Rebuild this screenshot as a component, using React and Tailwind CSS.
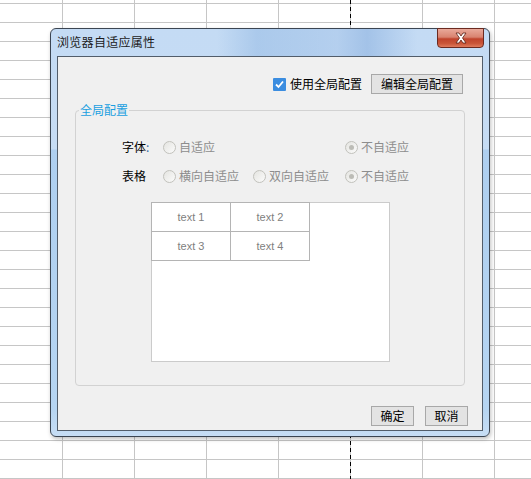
import React from "react";

const cjk = "font-['Microsoft_YaHei','Noto_Sans_CJK_SC',sans-serif]";

const Radio = ({ checked }) => (
  <span className="relative flex h-[13px] w-[13px] shrink-0 items-center justify-center rounded-full border border-[#c2c2bc] bg-[linear-gradient(135deg,#e4e4e0,#fbfbfb)]">
    {checked && <span className="h-[5px] w-[5px] rounded-full bg-[#bcbcb6]" />}
  </span>
);

const Option = ({ label, checked }) => (
  <div className="flex items-center gap-[3px] text-[#8d8d8d]">
    <Radio checked={checked} />
    <span>{label}</span>
  </div>
);

const CloseIcon = () => (
  <svg width="14" height="12" viewBox="0 0 14 12">
    <path
      d="M2 1 L5 1 L7 4 L9 1 L12 1 L8.5 6 L12 11 L9 11 L7 8 L5 11 L2 11 L5.5 6 Z"
      fill="#ffffff"
      stroke="#5a1f14"
      strokeWidth="0.8"
      strokeLinejoin="round"
    />
  </svg>
);

export default function App() {
  return (
    <div
      className={`relative h-[479px] w-[531px] overflow-hidden bg-white bg-[linear-gradient(to_right,#c6c6c6_1px,transparent_1px),linear-gradient(to_bottom,#c6c6c6_1px,transparent_1px)] bg-[length:72px_19px] bg-[position:62px_3px] ${cjk}`}
    >
      {/* page break line */}
      <div className="absolute left-[350px] top-0 h-full w-px bg-[repeating-linear-gradient(to_bottom,#000_0_4px,transparent_4px_7px)]" />

      {/* dialog */}
      <div className="absolute left-[50px] top-[28px] flex h-[409px] w-[440px] flex-col rounded-[6px] border border-[#3b4552] bg-[linear-gradient(to_bottom,#c4dbf4_0px,#c6dcf4_120px,#aecff0_121px,#b6d5f2_380px,#c8def5_409px)] px-[6px] pb-[5px] shadow-[1px_2px_4px_rgba(0,0,0,0.25)]">
        {/* title bar */}
        <div className="relative flex h-[27px] shrink-0 items-start justify-between">
          <div className="pointer-events-none absolute inset-y-0 left-[160px] w-[200px] bg-[linear-gradient(to_right,transparent,rgba(140,180,225,0.45)_20%,rgba(150,185,228,0.35)_60%,rgba(130,170,220,0.5)_75%,transparent)]" />
          <span className="relative mt-[5px] text-[12px] leading-[16px] tracking-[0.3px] text-[#1c1c1c]">
            浏览器自适应属性
          </span>
          <div className="relative -mr-px -mt-px flex h-[20px] w-[47px] items-center justify-center rounded-b-[4px] border border-[#6b2a20] bg-[linear-gradient(to_bottom,#e9a99a_0%,#d98370_45%,#c0432c_55%,#c95538_80%,#e07a5c_100%)]">
            <CloseIcon />
          </div>
        </div>

        {/* client area */}
        <div className="flex flex-1 flex-col border border-[#525d6a] bg-[#f0f0f0] text-[12px] leading-[16px] text-black">
          <div className="mr-[19px] mt-[17px] flex h-[20px] items-center justify-end">
            <span className="flex h-[13px] w-[13px] items-center justify-center rounded-[1px] bg-[#3b8de0]">
              <svg width="11" height="11" viewBox="0 0 11 11">
                <path d="M2 5.5 L4.5 8 L9 2.5" fill="none" stroke="#fff" strokeWidth="1.8" />
              </svg>
            </span>
            <span className="ml-[4px]">使用全局配置</span>
            <button className="ml-[9px] h-[20px] w-[92px] border border-[#a8a8a8] bg-[#e3e3e3] text-[12px] leading-[16px] text-black">
              编辑全局配置
            </button>
          </div>

          <fieldset className="mx-[17px] mt-[8px] h-[284px] rounded-[4px] border border-[#d2d2d2] pt-[19px]">
            <legend className="ml-[3px] px-[1px] leading-[16px] text-[#1a9fe0]">全局配置</legend>
            <div className="ml-[46px] grid grid-cols-[41px_90px_92px_auto] items-center">
              <div className="flex h-[20px] items-center">字体<span className="text-[#3a6ea5]">:</span></div>
              <Option label="自适应" />
              <div />
              <Option label="不自适应" checked />
            </div>
            <div className="ml-[46px] mt-[9px] grid grid-cols-[41px_90px_92px_auto] items-center">
              <div className="flex h-[20px] items-center">表格</div>
              <Option label="横向自适应" />
              <Option label="双向自适应" />
              <Option label="不自适应" checked />
            </div>

            <div className="ml-[75px] mt-[16px] h-[160px] w-[239px] border border-[#cbcbcb] bg-white">
              <table className="-ml-px -mt-px border-collapse font-['Liberation_Sans',sans-serif] text-[11px] text-[#808080]">
                <tbody>
                  <tr>
                    <td className="h-[29px] w-[79px] border border-[#b4b4b4] text-center">text 1</td>
                    <td className="h-[29px] w-[79px] border border-[#b4b4b4] text-center">text 2</td>
                  </tr>
                  <tr>
                    <td className="h-[29px] w-[79px] border border-[#b4b4b4] text-center">text 3</td>
                    <td className="h-[29px] w-[79px] border border-[#b4b4b4] text-center">text 4</td>
                  </tr>
                </tbody>
              </table>
            </div>
          </fieldset>

          <div className="mr-[14px] mt-[20px] flex justify-end gap-[11px]">
            <button className="h-[20px] w-[43px] border border-[#a8a8a8] bg-[#e3e3e3] text-[12px] leading-[16px]">
              确定
            </button>
            <button className="h-[20px] w-[43px] border border-[#a8a8a8] bg-[#e3e3e3] text-[12px] leading-[16px]">
              取消
            </button>
          </div>
        </div>
      </div>
    </div>
  );
}
